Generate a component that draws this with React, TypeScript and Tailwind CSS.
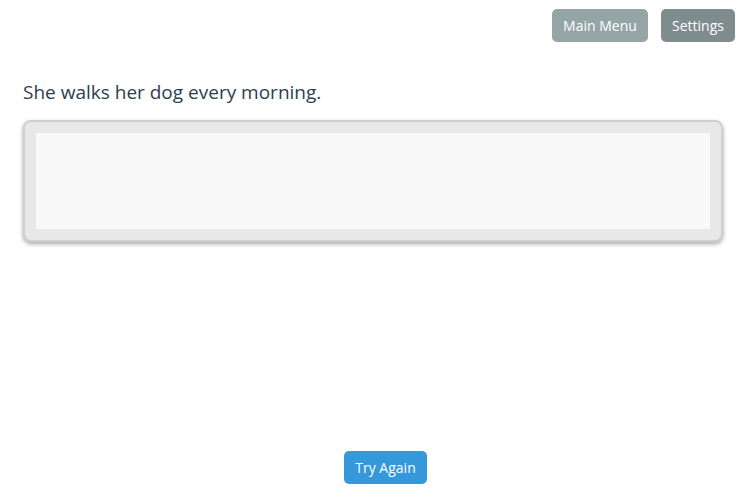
export default function App() {
  return (
    <div className="h-screen flex flex-col bg-white text-[#2c3e50]" style={{ fontFamily: '"Open Sans", "Noto Sans", sans-serif' }}>
      {/* Top bar */}
      <div className="flex justify-end gap-[13px] pt-[9px] pr-[2px]">
        <button className="h-[33px] w-[96px] rounded-[5px] bg-[#95a5a6] text-[14px] text-white">
          Main Menu
        </button>
        <button className="h-[33px] w-[74px] rounded-[5px] bg-[#7f8c8d] text-[14px] text-white">
          Settings
        </button>
      </div>

      {/* Sentence */}
      <div className="px-[23px] pt-[37px]">
        <p className="text-[19px] leading-[26px]">She walks her dog every morning.</p>
        <div className="mt-[15px] w-[700px] rounded-[8px] border-2 border-[#cfcfcf] bg-[#e8e8e8] p-[11px] shadow-[0_2px_4px_rgba(0,0,0,0.35)]">
          <div className="h-[96px] bg-[#f9f9f9]" />
        </div>
      </div>

      {/* Footer */}
      <div className="mt-auto flex justify-center pl-[34px] pb-[8px]">
        <button className="h-[33px] w-[83px] rounded-[5px] bg-[#3498db] text-[14px] text-white">
          Try Again
        </button>
      </div>
    </div>
  );
}
